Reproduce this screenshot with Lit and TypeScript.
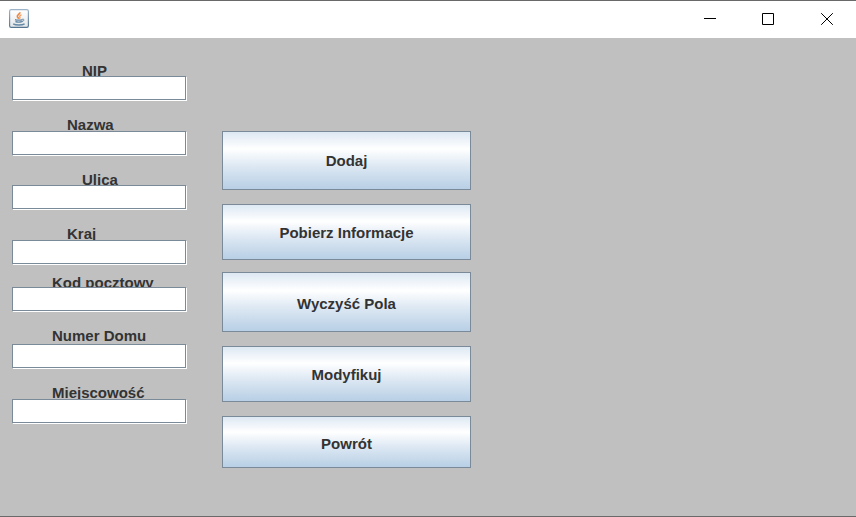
import { LitElement, html, css, svg } from "lit";
import { customElement } from "lit/decorators.js";

interface Field {
  id: string;
  label: string;
  indent: "near" | "mid" | "far";
  fit: "tight" | "snug" | "normal" | "loose";
}

const FIELDS: Field[] = [
  { id: "nip", label: "NIP", indent: "far", fit: "snug" },
  { id: "nazwa", label: "Nazwa", indent: "mid", fit: "normal" },
  { id: "ulica", label: "Ulica", indent: "far", fit: "snug" },
  { id: "kraj", label: "Kraj", indent: "mid", fit: "normal" },
  { id: "kod", label: "Kod pocztowy", indent: "near", fit: "tight" },
  { id: "numer", label: "Numer Domu", indent: "near", fit: "loose" },
  { id: "miejscowosc", label: "Miejscowość", indent: "near", fit: "normal" },
];

const javaIcon = svg`
  <svg class="java" viewBox="0 0 20 20" aria-hidden="true">
    <defs>
      <linearGradient id="face" x1="0" y1="0" x2="0" y2="1">
        <stop offset="0" stop-color="#ffffff"/>
        <stop offset="1" stop-color="#e3e6e8"/>
      </linearGradient>
      <linearGradient id="edge" x1="0" y1="0" x2="0" y2="1">
        <stop offset="0" stop-color="#9db4c8"/>
        <stop offset="1" stop-color="#547591"/>
      </linearGradient>
    </defs>
    <rect x="0.6" y="0.6" width="18.8" height="17.8" rx="1.6" fill="url(#face)" stroke="url(#edge)" stroke-width="1.2"/>
    <path d="M10.8 3.2c.7 1.8-3.2 2.7-2.4 4.5.3.8 1.1 1.2 1.2 2.2" fill="none" stroke="#ee8540" stroke-width="1.7"/>
    <path d="M12.6 5.8c-1.7.6-2.3 1.3-1.7 2.3.4.7.1 1.2-.5 1.8" fill="none" stroke="#f09a5c" stroke-width="1.2"/>
    <path d="M6 10.6c2.2.7 5.4.6 7.6 0M6.4 12.5c2 .7 4.6.7 6.6 0" fill="none" stroke="#6488a6" stroke-width="1.4"/>
    <path d="M13.4 10.2c2-.4 2.2 1.7-.4 2.4" fill="none" stroke="#6488a6" stroke-width="1"/>
    <path d="M4.2 14.8c2.4 1.6 8.8 1.6 11.4.1" fill="none" stroke="#6488a6" stroke-width="1.4"/>
  </svg>`;

@customElement("app-root")
export class AppRoot extends LitElement {
  static styles = css`
    :host {
      display: flex;
      flex-direction: column;
      box-sizing: border-box;
      min-height: 100vh;
      background: #c0c0c0;
      border-top: 1px solid #696969;
      border-bottom: 1px solid #696969;
      color: #333;
      font: bold 15px/17px "Liberation Sans", Arial, sans-serif;
    }
    .titlebar {
      display: flex;
      align-items: stretch;
      justify-content: space-between;
      height: 37px;
      padding-left: 9px;
      background: #fff;
    }
    .java {
      width: 20px;
      height: 20px;
      margin-top: 8px;
    }
    .controls {
      display: flex;
    }
    .control {
      display: grid;
      place-items: center;
      width: 58px;
      padding: 0 0 2px;
      border: 0;
      background: none;
      color: #000;
    }
    .close {
      width: 59px;
      padding-left: 1px;
    }
    .control svg {
      display: block;
      width: 12px;
      height: 12px;
      fill: none;
      stroke: currentColor;
    }
    .content {
      display: grid;
      grid-template-columns: 175px 249px;
      column-gap: 35px;
      align-items: start;
      padding: 24px 12px;
    }
    .fields {
      display: flex;
      flex-direction: column;
      gap: 15px;
    }
    .field {
      display: flex;
      flex-direction: column;
    }
    .label {
      overflow: hidden;
      white-space: nowrap;
    }
    .near { padding-left: 40px; }
    .mid { padding-left: 55px; }
    .far { padding-left: 70px; }
    .tight { height: 13px; }
    .snug { height: 14px; }
    .normal { height: 15px; }
    .loose { height: 17px; }
    .field:has(.tight) {
      margin-top: -6px;
    }
    .input {
      box-sizing: border-box;
      height: 24px;
      margin: 0 1px 1px 0;
      padding: 0 2px;
      border: 1px solid #7a8a99;
      border-radius: 0;
      outline: 0;
      background: #fff;
      box-shadow: 1px 1px 0 #fff;
      color: #333;
      font: inherit;
    }
    .actions {
      display: flex;
      flex-direction: column;
      gap: 14px;
      padding-top: 69px;
    }
    .action {
      height: 56px;
      padding: 0;
      border: 1px solid #7a8a99;
      border-radius: 0;
      background: linear-gradient(#dde8f3, #fff 30%, #dde8f3 60%, #b8cfe5);
      color: inherit;
      font: inherit;
    }
    .tall { height: 59px; }
    .taller {
      height: 60px;
      margin-top: -2px;
      padding-top: 2px;
    }
    .short {
      height: 52px;
      padding-top: 2px;
    }
  `;

  render() {
    return html`
      <header class="titlebar">
        ${javaIcon}
        <div class="controls">
          <button class="control" aria-label="Minimalizuj">
            <svg viewBox="0 0 12 12"><path d="M0 5.5h12" /></svg>
          </button>
          <button class="control" aria-label="Maksymalizuj">
            <svg viewBox="0 0 12 12"><path d="M.5.5h11v11H.5z" /></svg>
          </button>
          <button class="control close" aria-label="Zamknij">
            <svg viewBox="0 0 12 12"><path d="M.2.2l11.6 11.6M11.8.2L.2 11.8" /></svg>
          </button>
        </div>
      </header>
      <main class="content">
        <form class="fields">
          ${FIELDS.map(
            (f) => html`
              <div class="field">
                <label class="label ${f.indent} ${f.fit}" for=${f.id}>${f.label}</label>
                <input class="input" id=${f.id} type="text" />
              </div>
            `
          )}
        </form>
        <div class="actions">
          <button class="action tall">Dodaj</button>
          <button class="action">Pobierz Informacje</button>
          <button class="action taller">Wyczyść Pola</button>
          <button class="action">Modyfikuj</button>
          <button class="action short">Powrót</button>
        </div>
      </main>
    `;
  }
}
